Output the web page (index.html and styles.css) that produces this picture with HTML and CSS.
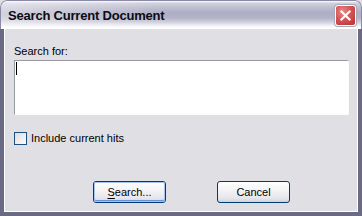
FILE: index.html
```html
<!DOCTYPE html>
<html>
<head>
<meta charset="utf-8">
<link rel="stylesheet" href="styles.css">
</head>
<body>
<div class="window">
  <div class="titlebar">
    <span class="title">Search Current Document</span>
    <span class="close" aria-label="Close">
      <svg width="21" height="21" viewBox="0 0 21 21">
        <path d="M6 6 L15 15 M15 6 L6 15" stroke="#fff" stroke-width="2.4" stroke-linecap="square" fill="none"/>
      </svg>
    </span>
  </div>
  <div class="client">
    <div class="label">Search for:</div>
    <div class="textbox"><span class="caret"></span></div>
    <div class="check"><span class="box"></span><span class="check-text">Include current hits</span></div>
    <div class="buttons">
      <span class="btn default"><span class="btn-inner"><u>S</u>earch...</span></span>
      <span class="btn"><span class="btn-inner">Cancel</span></span>
    </div>
  </div>
</div>
</body>
</html>
```

FILE: styles.css
```css
html, body {
  margin: 0;
  padding: 0;
  background: #e0dfe3;
}
.window {
  width: 362px;
  height: 216px;
  box-sizing: border-box;
  display: flex;
  flex-direction: column;
  background: #e0dfe3;
  border-radius: 7px 7px 0 0;
  overflow: hidden;
  font-family: "Liberation Sans", Arial, sans-serif;
}
.titlebar {
  height: 29px;
  flex: none;
  box-sizing: border-box;
  display: flex;
  align-items: center;
  justify-content: space-between;
  padding: 0 5px 0 7px;
  border: 1px solid #8b8aa6;
  border-bottom: none;
  border-radius: 7px 7px 0 0;
  background:
    linear-gradient(90deg, rgba(255,255,255,0.45) 0%, rgba(255,255,255,0) 45%),
    linear-gradient(180deg, #ffffff 0px, #d2d2de 2px, #c0c0d2 6px, #aeaec4 12px, #b4b4c8 17px, #cfcfdc 21px, #f4f4f8 25px, #ffffff 27px);
}
.title {
  font-weight: bold;
  font-size: 13px;
  color: #0b0b14;
  letter-spacing: -0.2px;
  padding-top: 1px;
}
.close {
  width: 21px;
  height: 21px;
  box-sizing: border-box;
  border: 1px solid #ffffff;
  border-radius: 3px;
  background: radial-gradient(circle at 35% 30%, #e98a8a 0%, #d35555 45%, #b33333 100%);
  box-shadow: 0 0 0 1px #a9a9bd;
  display: flex;
  margin-top: 1px;
}
.close svg {
  width: 19px;
  height: 19px;
}
.client {
  flex: 1;
  display: flex;
  flex-direction: column;
  padding: 0 10px 0 10px;
  border-left: 4px solid #6a6a84;
  border-right: 4px solid #6a6a84;
  border-bottom: 4px solid #6a6a84;
  box-shadow: inset 1px 0 #ffffff, inset -1px 0 #ffffff, inset 0 -1px #ffffff;
  font-size: 11px;
  color: #000;
}
.label {
  margin-top: 15px;
  height: 14px;
  line-height: 14px;
}
.textbox {
  margin-top: 2px;
  height: 55px;
  width: 335px;
  box-sizing: border-box;
  background: #fff;
  border-top: 1px solid #9a9aa2;
  border-left: 1px solid #9a9aa2;
  border-right: 1px solid #fbfbfc;
  border-bottom: 1px solid #fbfbfc;
  padding: 1px 0 0 1px;
}
.caret {
  display: block;
  width: 1px;
  height: 13px;
  background: #000;
}
.check {
  margin-top: 17px;
  display: flex;
  align-items: center;
  height: 13px;
}
.box {
  width: 13px;
  height: 13px;
  box-sizing: border-box;
  border: 1px solid #1c5180;
  background: linear-gradient(135deg, #dcdce0 0%, #f0f0f2 60%, #fbfbfb 100%);
  margin-right: 4px;
}
.check-text {
  line-height: 13px;
}
.buttons {
  margin-top: 36px;
  display: flex;
  padding-left: 79px;
  gap: 51px;
}
.btn {
  width: 73px;
  height: 22px;
  box-sizing: border-box;
  border: 1px solid #003c74;
  border-radius: 3px;
  background: linear-gradient(180deg, #ffffff 0%, #f4f4f6 40%, #e6e6ec 80%, #d2d2dc 100%);
  display: flex;
}
.btn-inner {
  flex: 1;
  display: flex;
  align-items: center;
  justify-content: center;
  border-radius: 2px;
}
.btn.default .btn-inner {
  box-shadow: inset 0 0 0 1px #a8c2ee, inset 0 -1px 0 1px #6b8fd8;
}
u {
  text-decoration-thickness: 1px;
  text-underline-offset: 2px;
}
```
